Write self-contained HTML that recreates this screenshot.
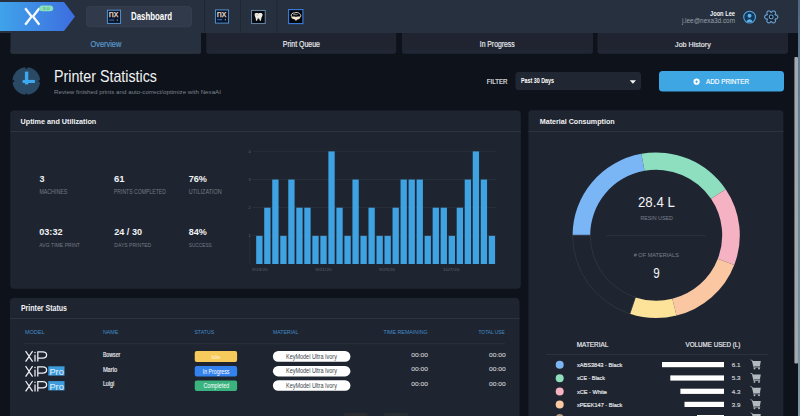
<!DOCTYPE html>
<html><head><meta charset="utf-8">
<style>
*{margin:0;padding:0;box-sizing:border-box}
html,body{width:800px;height:416px;overflow:hidden;background:#0e121a}
svg{position:absolute;left:0;top:0;display:block}
text{font-family:"Liberation Sans",sans-serif}
</style></head><body>
<svg width="800" height="416" viewBox="0 0 800 416">
<defs>
<linearGradient id="lg" x1="0" x2="1" y1="0" y2="0"><stop offset="0" stop-color="#3fa3ea"/><stop offset="1" stop-color="#3d6ddf"/></linearGradient>
<linearGradient id="sb" x1="0" x2="1" y1="0" y2="0"><stop offset="0" stop-color="#8e9399"/><stop offset="0.5" stop-color="#b4b8bc"/><stop offset="1" stop-color="#8e9399"/></linearGradient>
<linearGradient id="edge" x1="0" x2="0" y1="0" y2="1"><stop offset="0" stop-color="#4d6784"/><stop offset="0.15" stop-color="#5f7a90"/><stop offset="1" stop-color="#7f98a2"/></linearGradient>
</defs>
<!-- header -->
<rect x="0" y="0" width="800" height="33" fill="#27303e"/>
<rect x="86.4" y="6.4" width="105.2" height="20.4" rx="4" fill="#303a4b" stroke="#384154" stroke-width="0.8"/>
<rect x="204" y="0" width="1" height="32.5" fill="#20262f"/>
<rect x="240" y="0" width="1" height="32.5" fill="#20262f"/>
<rect x="276.5" y="0" width="1" height="32.5" fill="#20262f"/>
<!-- logo -->
<path d="M0 2H64L75 16.5L64 31H0Z" fill="url(#lg)"/>
<path d="M25.2 8.2L31.6 16.5L25.2 24.8M39.4 8.2L33 16.5L39.4 24.8" stroke="#f4f8fd" stroke-width="2.3" fill="none" stroke-linejoin="miter"/>
<rect x="39.2" y="5.4" width="14" height="5.8" rx="2.9" fill="#8ae0b8"/>
<text x="42.8" y="9.7" font-size="4" fill="#3f9a78" textLength="6.4" lengthAdjust="spacingAndGlyphs">3.0</text>
<!-- nx icon -->
<g id="nx">
<rect x="107.4" y="10.2" width="13.2" height="13.2" fill="#08152b" stroke="#5c9ada" stroke-width="0.9"/>
<text x="108.7" y="17.1" font-size="9.2" fill="#e6d9c0" textLength="9.5" lengthAdjust="spacingAndGlyphs" stroke="#e6d9c0" stroke-width="0.25">nx</text>
<rect x="109.2" y="19.6" width="5" height="0.9" fill="#3d85d6"/><rect x="116.8" y="19.6" width="1.2" height="0.9" fill="#cfc2a8"/>
</g>
<g transform="translate(108 -0.3)" >
<rect x="107.4" y="10.2" width="13.2" height="13.2" fill="#08152b" stroke="#5c9ada" stroke-width="0.9"/>
<text x="108.7" y="17.1" font-size="9.2" fill="#e6d9c0" textLength="9.5" lengthAdjust="spacingAndGlyphs" stroke="#e6d9c0" stroke-width="0.25">nx</text>
<rect x="109.2" y="19.6" width="5" height="0.9" fill="#3d85d6"/><rect x="116.8" y="19.6" width="1.2" height="0.9" fill="#cfc2a8"/>
</g>
<!-- tooth -->
<rect x="251.6" y="10.4" width="13.6" height="13.2" fill="#070a10" stroke="#7393b8" stroke-width="0.9"/>
<path d="M254.6 14.6C254.6 13 256.4 12.6 258.4 13.4C260.4 12.6 262.6 13 262.6 14.6C262.6 16.1 261.6 16.9 261.3 18.2L260.9 20.8H259.9L259.1 18.5H257.8L257 20.8H256L255.7 18.2C255.4 16.9 254.6 16.1 254.6 14.6Z" fill="#eeebe4"/><path d="M255.5 15.2C256.5 14.6 257.5 15.4 258.4 15" stroke="#9a9890" stroke-width="0.5" fill="none"/>
<!-- brain -->
<rect x="288.6" y="9.6" width="14.3" height="14" fill="#04060b" stroke="#3a7ee0" stroke-width="1.1"/>
<path d="M291.2 16C290.8 14.3 292.5 12.7 294.6 12.9C296.2 12.1 298.8 12.5 299.8 13.9C301.1 14.6 301 16.3 300.2 17" fill="none" stroke="#ece6da" stroke-width="0.95"/>
<path d="M290.9 16.3C292.5 16.9 294.5 16.2 296 17C297.5 16.4 299 16.6 300.6 16.8C300.4 18.6 298.6 19.6 297.2 19.4L296 20.9L294.8 19.4C292.6 19.4 291.2 18 290.9 16.3Z" fill="#efe4cd"/>
<path d="M293.2 14.8C294.6 14.2 296 15.2 297.6 14.5" fill="none" stroke="#d8d2c6" stroke-width="0.7"/>
<!-- user icon -->
<circle cx="749.6" cy="17.1" r="5.9" fill="#0f3a5e" stroke="#5aa2dc" stroke-width="1.1"/>
<circle cx="749.5" cy="15.8" r="2" fill="#5fb0e6"/>
<path d="M746.6 21.9C746.8 20.2 748 19.2 749.5 19.2C751 19.2 752.2 20.2 752.4 21.9Z" fill="#5fb0e6"/>
<!-- gear -->
<path d="M771.20 12.35L771.36 12.35L771.52 12.31L771.73 11.89L771.94 11.61L772.17 11.40L772.40 11.24L772.64 11.12L772.88 11.03L773.12 10.98L773.36 10.95L773.60 10.96L773.83 10.99L774.06 11.04L774.27 11.12L774.48 11.23L774.67 11.35L774.84 11.50L775.00 11.67L775.15 11.85L775.27 12.05L775.37 12.27L775.44 12.51L775.49 12.76L775.50 13.03L775.48 13.31L775.41 13.61L775.27 13.94L775.02 14.33L775.06 14.49L775.14 14.62L775.22 14.76L775.34 14.88L775.80 14.85L776.15 14.90L776.45 14.99L776.70 15.11L776.93 15.26L777.12 15.42L777.29 15.61L777.43 15.80L777.55 16.01L777.64 16.22L777.70 16.45L777.74 16.67L777.75 16.90L777.74 17.13L777.70 17.35L777.64 17.58L777.55 17.79L777.43 18.00L777.29 18.19L777.12 18.38L776.93 18.54L776.70 18.69L776.45 18.81L776.15 18.90L775.80 18.95L775.34 18.92L775.22 19.04L775.14 19.17L775.06 19.31L775.02 19.47L775.27 19.86L775.41 20.19L775.48 20.49L775.50 20.77L775.49 21.04L775.44 21.29L775.37 21.53L775.27 21.75L775.15 21.95L775.00 22.13L774.84 22.30L774.67 22.45L774.48 22.57L774.27 22.68L774.06 22.76L773.83 22.81L773.60 22.84L773.36 22.85L773.12 22.82L772.88 22.77L772.64 22.68L772.40 22.56L772.17 22.40L771.94 22.19L771.73 21.91L771.52 21.49L771.36 21.45L771.20 21.45L771.04 21.45L770.88 21.49L770.67 21.91L770.46 22.19L770.23 22.40L770.00 22.56L769.76 22.68L769.52 22.77L769.28 22.82L769.04 22.85L768.80 22.84L768.57 22.81L768.34 22.76L768.13 22.68L767.93 22.57L767.73 22.45L767.56 22.30L767.40 22.13L767.25 21.95L767.13 21.75L767.03 21.53L766.96 21.29L766.91 21.04L766.90 20.77L766.92 20.49L766.99 20.19L767.13 19.86L767.38 19.47L767.34 19.31L767.26 19.18L767.18 19.04L767.06 18.92L766.60 18.95L766.25 18.90L765.95 18.81L765.70 18.69L765.47 18.54L765.28 18.38L765.11 18.19L764.97 18.00L764.85 17.79L764.76 17.58L764.70 17.35L764.66 17.13L764.65 16.90L764.66 16.67L764.70 16.45L764.76 16.22L764.85 16.01L764.97 15.80L765.11 15.61L765.28 15.42L765.47 15.26L765.70 15.11L765.95 14.99L766.25 14.90L766.60 14.85L767.06 14.88L767.18 14.76L767.26 14.62L767.34 14.49L767.38 14.33L767.13 13.94L766.99 13.61L766.92 13.31L766.90 13.03L766.91 12.76L766.96 12.51L767.03 12.27L767.13 12.05L767.25 11.85L767.40 11.67L767.56 11.50L767.73 11.35L767.93 11.23L768.13 11.12L768.34 11.04L768.57 10.99L768.80 10.96L769.04 10.95L769.28 10.98L769.52 11.03L769.76 11.12L770.00 11.24L770.23 11.40L770.46 11.61L770.67 11.89L770.88 12.31L771.04 12.35Z" fill="#1d2a3a" stroke="#6aa0cf" stroke-width="1.15" stroke-linejoin="round"/>
<circle cx="771.2" cy="16.9" r="1.9" fill="#0a111c" stroke="#6aa0cf" stroke-width="1.1"/>

<!-- tabs -->
<path d="M10.5 33.0H201.0V51.3Q201.0 53.8 198.5 53.8H13.0Q10.5 53.8 10.5 51.3Z" fill="#27303e"/>
<path d="M10.5 49.3H201.0V51.3Q201.0 53.8 198.5 53.8H13.0Q10.5 53.8 10.5 51.3Z" fill="#29313f"/>
<path d="M206.2 33.0H396.2V51.3Q396.2 53.8 393.7 53.8H208.7Q206.2 53.8 206.2 51.3Z" fill="#1f2430"/>
<path d="M206.7 49.3H395.7V51.6Q395.7 53.6 393.7 53.6H208.7Q206.7 53.6 206.7 51.6Z" fill="#212634"/>
<path d="M402.0 33.0H593.0V51.3Q593.0 53.8 590.5 53.8H404.5Q402.0 53.8 402.0 51.3Z" fill="#1f2430"/>
<path d="M402.5 49.3H592.5V51.6Q592.5 53.6 590.5 53.6H404.5Q402.5 53.6 402.5 51.6Z" fill="#212634"/>
<path d="M597.5 33.0H788.0V51.3Q788.0 53.8 785.5 53.8H600.0Q597.5 53.8 597.5 51.3Z" fill="#1f2430"/>
<path d="M598.0 49.3H787.5V51.6Q787.5 53.6 785.5 53.6H600.0Q598.0 53.6 598.0 51.6Z" fill="#212634"/>
<!-- clock -->
<circle cx="26.3" cy="81" r="13.8" fill="#2a4964"/>
<g fill="#0e121a"><rect x="25.6" y="66.8" width="1.8" height="2"/><rect x="25.6" y="93.6" width="1.8" height="2"/><rect x="12.2" y="80.3" width="2" height="1.8"/><rect x="38.8" y="80.3" width="2" height="1.8"/></g>
<rect x="24.9" y="71.6" width="3.4" height="12.8" fill="#3da8f0"/><rect x="22.6" y="79.9" width="12.3" height="3.1" fill="#3da8f0"/>

<!-- filter / dropdown / button -->
<rect x="515.5" y="72" width="125.5" height="18" rx="3" fill="#212732"/>
<path d="M629.8 80.2H636L632.9 83.7Z" fill="#f4f5f7"/>
<rect x="659" y="71" width="125" height="20.6" rx="3.5" fill="#3ea6e3"/>
<circle cx="696.6" cy="81.7" r="3.1" fill="#fff"/>
<rect x="695.2" y="81.3" width="2.8" height="0.8" fill="#3ea6e3"/><rect x="696.2" y="80.3" width="0.8" height="2.8" fill="#3ea6e3"/>

<!-- panels -->
<rect x="10.2" y="110.5" width="510.6" height="178.3" rx="4" fill="#1f2530"/>
<rect x="10.2" y="131" width="510.6" height="1" fill="#2d343f"/>
<rect x="528.4" y="110.3" width="255" height="330" rx="4" fill="#1f2530"/>
<rect x="528.4" y="131" width="255" height="1" fill="#2d343f"/>
<rect x="10" y="298" width="509.5" height="140" rx="4" fill="#1f2530"/>
<rect x="10" y="318" width="509.5" height="1" fill="#2d343f"/>

<!-- chart -->
<g stroke="#2c333e" stroke-width="0.7">
<line x1="252.5" y1="151.3" x2="496" y2="151.3"/>
<line x1="252.5" y1="179.4" x2="496" y2="179.4"/>
<line x1="252.5" y1="207.5" x2="496" y2="207.5"/>
<line x1="252.5" y1="235.6" x2="496" y2="235.6"/>
<line x1="249.8" y1="236" x2="249.8" y2="264.5"/>
</g>
<g font-size="4" fill="#5d6470">
<text x="248.6" y="152.6">4</text><text x="248.6" y="180.7">3</text><text x="248.6" y="208.8">2</text><text x="248.6" y="236.9">1</text>
<text x="252" y="271" textLength="15.6" lengthAdjust="spacingAndGlyphs">9/13/20</text><text x="315.2" y="271" textLength="16.6" lengthAdjust="spacingAndGlyphs">9/21/20</text><text x="379" y="271" textLength="16" lengthAdjust="spacingAndGlyphs">9/29/20</text><text x="443" y="271" textLength="16.5" lengthAdjust="spacingAndGlyphs">10/7/20</text>
</g>
<g fill="#3fa3e3">
61
<rect x="256.20" y="235.85" width="6.3" height="28.15"/><rect x="264.22" y="207.70" width="6.3" height="56.30"/><rect x="272.24" y="179.55" width="6.3" height="84.45"/><rect x="280.26" y="235.85" width="6.3" height="28.15"/><rect x="288.28" y="179.55" width="6.3" height="84.45"/><rect x="296.30" y="207.70" width="6.3" height="56.30"/><rect x="304.32" y="207.70" width="6.3" height="56.30"/><rect x="312.34" y="235.85" width="6.3" height="28.15"/><rect x="320.36" y="235.85" width="6.3" height="28.15"/><rect x="328.38" y="151.40" width="6.3" height="112.60"/><rect x="336.40" y="207.70" width="6.3" height="56.30"/><rect x="344.42" y="235.85" width="6.3" height="28.15"/><rect x="352.44" y="179.55" width="6.3" height="84.45"/><rect x="360.46" y="235.85" width="6.3" height="28.15"/><rect x="368.48" y="207.70" width="6.3" height="56.30"/><rect x="376.50" y="235.85" width="6.3" height="28.15"/><rect x="384.52" y="235.85" width="6.3" height="28.15"/><rect x="392.54" y="207.70" width="6.3" height="56.30"/><rect x="400.56" y="179.55" width="6.3" height="84.45"/><rect x="408.58" y="179.55" width="6.3" height="84.45"/><rect x="416.60" y="179.55" width="6.3" height="84.45"/><rect x="424.62" y="235.85" width="6.3" height="28.15"/><rect x="432.64" y="207.70" width="6.3" height="56.30"/><rect x="440.66" y="207.70" width="6.3" height="56.30"/><rect x="448.68" y="235.85" width="6.3" height="28.15"/><rect x="456.70" y="207.70" width="6.3" height="56.30"/><rect x="464.72" y="179.55" width="6.3" height="84.45"/><rect x="472.74" y="151.40" width="6.3" height="112.60"/><rect x="480.76" y="179.55" width="6.3" height="84.45"/><rect x="488.78" y="235.85" width="6.3" height="28.15"/>
</g>

<!-- donut -->
<path d="M572.60 235.25A83.60 82.80 0 0 1 641.40 153.76L644.51 170.79A66.00 65.50 0 0 0 590.20 235.25Z" fill="#7ab5f6"/>
<path d="M641.40 153.76A83.60 82.80 0 0 1 725.67 189.19L711.04 198.81A66.00 65.50 0 0 0 644.51 170.79Z" fill="#8edfbf"/>
<path d="M725.67 189.19A83.60 82.80 0 0 1 734.25 264.92L717.82 258.72A66.00 65.50 0 0 0 711.04 198.81Z" fill="#f5b2c2"/>
<path d="M734.25 264.92A83.60 82.80 0 0 1 676.57 315.56L672.28 298.78A66.00 65.50 0 0 0 717.82 258.72Z" fill="#fbc7a2"/>
<path d="M676.57 315.56A83.60 82.80 0 0 1 629.81 313.82L635.37 297.40A66.00 65.50 0 0 0 672.28 298.78Z" fill="#fde29a"/>
<path d="M629.81 313.82A83.60 82.80 0 0 1 572.60 235.25L590.20 235.25A66.00 65.50 0 0 0 635.37 297.40Z" fill="none" stroke="#2e3540" stroke-width="0.9"/>


<rect x="606" y="235.3" width="100" height="0.8" fill="#2d343f"/>

<!-- material list -->
<rect x="546" y="354" width="222" height="0.9" fill="#2d343f"/>
<circle cx="559.7" cy="364.8" r="4" fill="#7db6f5"/>
<circle cx="559.7" cy="378.2" r="4" fill="#8fdfbd"/>
<circle cx="559.7" cy="391.5" r="4" fill="#f5b3c1"/>
<circle cx="559.7" cy="404.6" r="4" fill="#fbc9a3"/>
<circle cx="559.7" cy="418" r="4" fill="#b59a80"/>
<g fill="#ffffff">
<rect x="662" y="362" width="62" height="5.2"/>
<rect x="670.3" y="375.4" width="53.7" height="5.2"/>
<rect x="680.4" y="388.7" width="43.6" height="5.2"/>
<rect x="684.5" y="401.8" width="39.5" height="5.2"/>
<rect x="697" y="415" width="27" height="5.2"/>
</g>
<g id="cart" fill="#b4b9bf">
<path d="M750.6 359.4L752.4 360.2L752.9 361.1H760.8L759.9 366.2H753.9L754.2 366.8H760.2V367.6H753.6L751.9 360.8L750.4 360.1Z"/>
<circle cx="754.5" cy="368.5" r="0.95"/><circle cx="759" cy="368.5" r="0.95"/>
</g>
<g transform="translate(0 13.4)"  fill="#b4b9bf">
<path d="M750.6 359.4L752.4 360.2L752.9 361.1H760.8L759.9 366.2H753.9L754.2 366.8H760.2V367.6H753.6L751.9 360.8L750.4 360.1Z"/>
<circle cx="754.5" cy="368.5" r="0.95"/><circle cx="759" cy="368.5" r="0.95"/>
</g><g transform="translate(0 26.7)"  fill="#b4b9bf">
<path d="M750.6 359.4L752.4 360.2L752.9 361.1H760.8L759.9 366.2H753.9L754.2 366.8H760.2V367.6H753.6L751.9 360.8L750.4 360.1Z"/>
<circle cx="754.5" cy="368.5" r="0.95"/><circle cx="759" cy="368.5" r="0.95"/>
</g><g transform="translate(0 39.8)"  fill="#b4b9bf">
<path d="M750.6 359.4L752.4 360.2L752.9 361.1H760.8L759.9 366.2H753.9L754.2 366.8H760.2V367.6H753.6L751.9 360.8L750.4 360.1Z"/>
<circle cx="754.5" cy="368.5" r="0.95"/><circle cx="759" cy="368.5" r="0.95"/>
</g><g transform="translate(0 53)"  fill="#b4b9bf">
<path d="M750.6 359.4L752.4 360.2L752.9 361.1H760.8L759.9 366.2H753.9L754.2 366.8H760.2V367.6H753.6L751.9 360.8L750.4 360.1Z"/>
<circle cx="754.5" cy="368.5" r="0.95"/><circle cx="759" cy="368.5" r="0.95"/>
</g>

<!-- table -->
<rect x="23.5" y="343.3" width="481.5" height="0.9" fill="#2d343f"/>
<g id="xip" stroke="#eef0f3" stroke-width="1.25" fill="none">
<path d="M25.6 351.2L29.2 356.4L25.6 361.6M32.6 351.2L29 356.4L32.6 361.6"/>
<path d="M35 354.8V361.6"/>
<path d="M37.8 361.6V351.8H42.6C45 351.8 46.6 353 46.6 354.9C46.6 356.8 45 358 42.6 358H37.8"/>
</g>
<circle cx="35" cy="352.4" r="0.75" fill="#eef0f3"/>
<g transform="translate(0 15)"  stroke="#eef0f3" stroke-width="1.25" fill="none">
<path d="M25.6 351.2L29.2 356.4L25.6 361.6M32.6 351.2L29 356.4L32.6 361.6"/>
<path d="M35 354.8V361.6"/>
<path d="M37.8 361.6V351.8H42.6C45 351.8 46.6 353 46.6 354.9C46.6 356.8 45 358 42.6 358H37.8"/>
</g><g transform="translate(0 29.8)"  stroke="#eef0f3" stroke-width="1.25" fill="none">
<path d="M25.6 351.2L29.2 356.4L25.6 361.6M32.6 351.2L29 356.4L32.6 361.6"/>
<path d="M35 354.8V361.6"/>
<path d="M37.8 361.6V351.8H42.6C45 351.8 46.6 353 46.6 354.9C46.6 356.8 45 358 42.6 358H37.8"/>
</g>
<circle cx="35" cy="367.4" r="0.75" fill="#eef0f3"/><circle cx="35" cy="382.2" r="0.75" fill="#eef0f3"/>
<rect x="48.3" y="366.3" width="16.2" height="9.3" fill="#3d9ddc"/>
<rect x="48.3" y="381.1" width="16.2" height="9.3" fill="#3d9ddc"/>
<text x="49.4" y="374.7" font-size="9.6" fill="#e3f0fa" textLength="14.4" lengthAdjust="spacingAndGlyphs">Pro</text>
<text x="49.4" y="389.5" font-size="9.6" fill="#e3f0fa" textLength="14.4" lengthAdjust="spacingAndGlyphs">Pro</text>
<rect x="194.75" y="351.1" width="42.35" height="10.8" rx="2" fill="#f7ca5c"/>
<rect x="194.75" y="366" width="42.35" height="10.4" rx="2" fill="#3482ee"/>
<rect x="194.75" y="380.5" width="42.35" height="10.5" rx="2" fill="#3bb37f"/>
<rect x="272.9" y="351" width="77.5" height="10.8" rx="5.4" fill="#ffffff"/>
<rect x="272.9" y="365.9" width="77.5" height="10.5" rx="5.25" fill="#ffffff"/>
<rect x="272.9" y="380.2" width="77.5" height="10.6" rx="5.3" fill="#ffffff"/>

<rect x="344" y="413" width="23.5" height="4" rx="1.5" fill="#2a2c30"/>
<rect x="384" y="413" width="24" height="4" rx="1.5" fill="#282c33"/>
<!-- texts -->
<text x="131.00" y="20.00" font-size="10.17" font-weight="700" fill="#ffffff" textLength="41.00" lengthAdjust="spacingAndGlyphs">Dashboard</text>
<text x="710.00" y="15.70" font-size="6.54" font-weight="700" fill="#f4f5f7" textLength="25.00" lengthAdjust="spacingAndGlyphs">Joon Lee</text>
<text x="681.90" y="23.20" font-size="6.69" font-weight="400" fill="#98a0aa" textLength="53.10" lengthAdjust="spacingAndGlyphs">j.lee@nexa3d.com</text>
<text x="90.50" y="47.10" font-size="8.72" font-weight="400" fill="#5b9bd0" textLength="30.75" lengthAdjust="spacingAndGlyphs" stroke="#5b9bd0" stroke-width="0.18">Overview</text>
<text x="282.75" y="46.75" font-size="8.21" font-weight="400" fill="#e8eaed" textLength="37.15" lengthAdjust="spacingAndGlyphs" stroke="#e8eaed" stroke-width="0.18">Print Queue</text>
<text x="479.75" y="46.75" font-size="8.21" font-weight="400" fill="#e8eaed" textLength="34.85" lengthAdjust="spacingAndGlyphs" stroke="#e8eaed" stroke-width="0.18">In Progress</text>
<text x="675.10" y="46.75" font-size="7.88" font-weight="400" fill="#e8eaed" textLength="35.65" lengthAdjust="spacingAndGlyphs" stroke="#e8eaed" stroke-width="0.18">Job History</text>
<text x="54.00" y="81.70" font-size="15.75" font-weight="400" fill="#f1f2f4" textLength="103.00" lengthAdjust="spacingAndGlyphs">Printer Statistics</text>
<text x="54.00" y="93.80" font-size="6.25" font-weight="400" fill="#7d838d" textLength="167.00" lengthAdjust="spacingAndGlyphs">Review finished prints and auto-correct/optimize with NexaAI</text>
<text x="486.75" y="84.00" font-size="7.27" font-weight="400" fill="#e4e7eb" textLength="20.75" lengthAdjust="spacingAndGlyphs" stroke="#e4e7eb" stroke-width="0.18">FILTER</text>
<text x="520.90" y="83.25" font-size="6.32" font-weight="700" fill="#ffffff" textLength="33.20" lengthAdjust="spacingAndGlyphs">Past 30 Days</text>
<text x="706.00" y="84.40" font-size="7.41" font-weight="400" fill="#ffffff" textLength="43.00" lengthAdjust="spacingAndGlyphs" stroke="#ffffff" stroke-width="0.18">ADD PRINTER</text>
<text x="20.60" y="123.75" font-size="8.09" font-weight="700" fill="#f1f2f4" textLength="75.65" lengthAdjust="spacingAndGlyphs">Uptime and Utilization</text>
<text x="539.75" y="123.75" font-size="8.09" font-weight="700" fill="#f1f2f4" textLength="74.85" lengthAdjust="spacingAndGlyphs">Material Consumption</text>
<text x="20.90" y="311.00" font-size="8.16" font-weight="700" fill="#f1f2f4" textLength="46.10" lengthAdjust="spacingAndGlyphs">Printer Status</text>
<text x="39.40" y="181.60" font-size="9.90" font-weight="700" fill="#f1f2f4" textLength="5.00" lengthAdjust="spacingAndGlyphs">3</text>
<text x="39.40" y="193.75" font-size="6.32" font-weight="400" fill="#737a85" textLength="27.85" lengthAdjust="spacingAndGlyphs">MACHINES</text>
<text x="113.90" y="181.70" font-size="9.90" font-weight="700" fill="#f1f2f4" textLength="10.60" lengthAdjust="spacingAndGlyphs">61</text>
<text x="113.90" y="193.80" font-size="6.40" font-weight="400" fill="#737a85" textLength="52.00" lengthAdjust="spacingAndGlyphs">PRINTS COMPLETED</text>
<text x="188.70" y="181.70" font-size="9.90" font-weight="700" fill="#f1f2f4" textLength="18.30" lengthAdjust="spacingAndGlyphs">76%</text>
<text x="188.70" y="193.80" font-size="6.40" font-weight="400" fill="#737a85" textLength="33.00" lengthAdjust="spacingAndGlyphs">UTILIZATION</text>
<text x="39.25" y="235.00" font-size="9.90" font-weight="700" fill="#f1f2f4" textLength="23.25" lengthAdjust="spacingAndGlyphs">03:32</text>
<text x="39.25" y="246.75" font-size="6.18" font-weight="400" fill="#737a85" textLength="40.75" lengthAdjust="spacingAndGlyphs">AVG TIME PRINT</text>
<text x="114.25" y="235.00" font-size="9.90" font-weight="700" fill="#f1f2f4" textLength="27.75" lengthAdjust="spacingAndGlyphs">24 / 30</text>
<text x="114.25" y="246.75" font-size="6.18" font-weight="400" fill="#737a85" textLength="37.00" lengthAdjust="spacingAndGlyphs">DAYS PRINTED</text>
<text x="188.75" y="235.00" font-size="9.90" font-weight="700" fill="#f1f2f4" textLength="18.00" lengthAdjust="spacingAndGlyphs">84%</text>
<text x="188.75" y="246.75" font-size="6.18" font-weight="400" fill="#737a85" textLength="23.00" lengthAdjust="spacingAndGlyphs">SUCCESS</text>
<text x="638.00" y="206.60" font-size="15.46" font-weight="400" fill="#f1f2f4" textLength="36.80" lengthAdjust="spacingAndGlyphs">28.4 L</text>
<text x="640.40" y="219.90" font-size="5.96" font-weight="400" fill="#79808a" textLength="32.50" lengthAdjust="spacingAndGlyphs">RESIN USED</text>
<text x="633.70" y="256.60" font-size="6.25" font-weight="400" fill="#79808a" textLength="45.20" lengthAdjust="spacingAndGlyphs"># OF MATERIALS</text>
<text x="653.20" y="277.50" font-size="13.95" font-weight="400" fill="#f1f2f4" textLength="6.50" lengthAdjust="spacingAndGlyphs">9</text>
<text x="576.80" y="347.00" font-size="6.69" font-weight="400" fill="#e8eaed" textLength="31.50" lengthAdjust="spacingAndGlyphs" stroke="#e8eaed" stroke-width="0.18">MATERIAL</text>
<text x="685.60" y="347.00" font-size="6.69" font-weight="400" fill="#e8eaed" textLength="54.80" lengthAdjust="spacingAndGlyphs" stroke="#e8eaed" stroke-width="0.18">VOLUME USED (L)</text>
<text x="576.90" y="366.90" font-size="6.10" font-weight="400" fill="#e8eaed" textLength="45.40" lengthAdjust="spacingAndGlyphs" stroke="#e8eaed" stroke-width="0.18">xABS3843 - Black</text>
<text x="731.70" y="366.90" font-size="6.10" font-weight="400" fill="#c9cdd3" textLength="8.70" lengthAdjust="spacingAndGlyphs" stroke="#c9cdd3" stroke-width="0.18">6.1</text>
<text x="576.90" y="380.40" font-size="6.10" font-weight="400" fill="#e8eaed" textLength="28.10" lengthAdjust="spacingAndGlyphs" stroke="#e8eaed" stroke-width="0.18">xCE - Black</text>
<text x="731.70" y="380.40" font-size="6.10" font-weight="400" fill="#c9cdd3" textLength="8.70" lengthAdjust="spacingAndGlyphs" stroke="#c9cdd3" stroke-width="0.18">5.3</text>
<text x="576.90" y="393.90" font-size="6.10" font-weight="400" fill="#e8eaed" textLength="30.10" lengthAdjust="spacingAndGlyphs" stroke="#e8eaed" stroke-width="0.18">xCE - White</text>
<text x="731.70" y="393.90" font-size="6.10" font-weight="400" fill="#c9cdd3" textLength="8.70" lengthAdjust="spacingAndGlyphs" stroke="#c9cdd3" stroke-width="0.18">4.3</text>
<text x="576.90" y="407.10" font-size="6.10" font-weight="400" fill="#e8eaed" textLength="45.40" lengthAdjust="spacingAndGlyphs" stroke="#e8eaed" stroke-width="0.18">xPEEK147 - Black</text>
<text x="731.70" y="407.10" font-size="6.10" font-weight="400" fill="#c9cdd3" textLength="8.70" lengthAdjust="spacingAndGlyphs" stroke="#c9cdd3" stroke-width="0.18">3.9</text>
<text x="25.00" y="334.20" font-size="6.25" font-weight="400" fill="#418bc9" textLength="19.60" lengthAdjust="spacingAndGlyphs">MODEL</text>
<text x="102.90" y="334.20" font-size="6.25" font-weight="400" fill="#418bc9" textLength="15.50" lengthAdjust="spacingAndGlyphs">NAME</text>
<text x="194.40" y="334.20" font-size="6.25" font-weight="400" fill="#418bc9" textLength="19.70" lengthAdjust="spacingAndGlyphs">STATUS</text>
<text x="272.90" y="334.20" font-size="6.25" font-weight="400" fill="#418bc9" textLength="25.40" lengthAdjust="spacingAndGlyphs">MATERIAL</text>
<text x="383.40" y="334.20" font-size="6.25" font-weight="400" fill="#418bc9" textLength="44.20" lengthAdjust="spacingAndGlyphs">TIME REMAINING</text>
<text x="478.50" y="334.20" font-size="6.25" font-weight="400" fill="#418bc9" textLength="26.30" lengthAdjust="spacingAndGlyphs">TOTAL USE</text>
<text x="102.90" y="357.10" font-size="6.83" font-weight="400" fill="#e8eaed" textLength="17.40" lengthAdjust="spacingAndGlyphs" stroke="#e8eaed" stroke-width="0.18">Bowser</text>
<text x="411.30" y="356.70" font-size="5.81" font-weight="400" fill="#e8eaed" textLength="16.70" lengthAdjust="spacingAndGlyphs">00:00</text>
<text x="489.00" y="356.70" font-size="5.81" font-weight="400" fill="#e8eaed" textLength="16.70" lengthAdjust="spacingAndGlyphs">00:00</text>
<text x="286.00" y="358.50" font-size="6.40" font-weight="400" fill="#3a3f47" textLength="50.90" lengthAdjust="spacingAndGlyphs">KeyModel Ultra Ivory</text>
<text x="102.90" y="371.70" font-size="6.83" font-weight="400" fill="#e8eaed" textLength="14.20" lengthAdjust="spacingAndGlyphs" stroke="#e8eaed" stroke-width="0.18">Mario</text>
<text x="411.30" y="371.30" font-size="5.81" font-weight="400" fill="#e8eaed" textLength="16.70" lengthAdjust="spacingAndGlyphs">00:00</text>
<text x="489.00" y="371.30" font-size="5.81" font-weight="400" fill="#e8eaed" textLength="16.70" lengthAdjust="spacingAndGlyphs">00:00</text>
<text x="286.00" y="373.30" font-size="6.40" font-weight="400" fill="#3a3f47" textLength="50.90" lengthAdjust="spacingAndGlyphs">KeyModel Ultra Ivory</text>
<text x="102.90" y="386.30" font-size="6.83" font-weight="400" fill="#e8eaed" textLength="11.20" lengthAdjust="spacingAndGlyphs" stroke="#e8eaed" stroke-width="0.18">Luigi</text>
<text x="411.30" y="385.60" font-size="5.81" font-weight="400" fill="#e8eaed" textLength="16.70" lengthAdjust="spacingAndGlyphs">00:00</text>
<text x="489.00" y="385.60" font-size="5.81" font-weight="400" fill="#e8eaed" textLength="16.70" lengthAdjust="spacingAndGlyphs">00:00</text>
<text x="286.00" y="387.70" font-size="6.40" font-weight="400" fill="#3a3f47" textLength="50.90" lengthAdjust="spacingAndGlyphs">KeyModel Ultra Ivory</text>
<text x="211.25" y="358.60" font-size="5.81" font-weight="400" fill="#fff6dd" textLength="9.00" lengthAdjust="spacingAndGlyphs">Idle</text>
<text x="202.80" y="373.60" font-size="6.32" font-weight="400" fill="#ffffff" textLength="26.60" lengthAdjust="spacingAndGlyphs">In Progress</text>
<text x="203.40" y="388.10" font-size="6.40" font-weight="400" fill="#ffffff" textLength="25.70" lengthAdjust="spacingAndGlyphs">Completed</text>

<!-- scrollbar -->
<rect x="794.4" y="57" width="3.6" height="306.5" rx="1" fill="#a3a8ad"/>
<rect x="798" y="0" width="2" height="416" fill="url(#edge)"/>
</svg>
</body></html>
